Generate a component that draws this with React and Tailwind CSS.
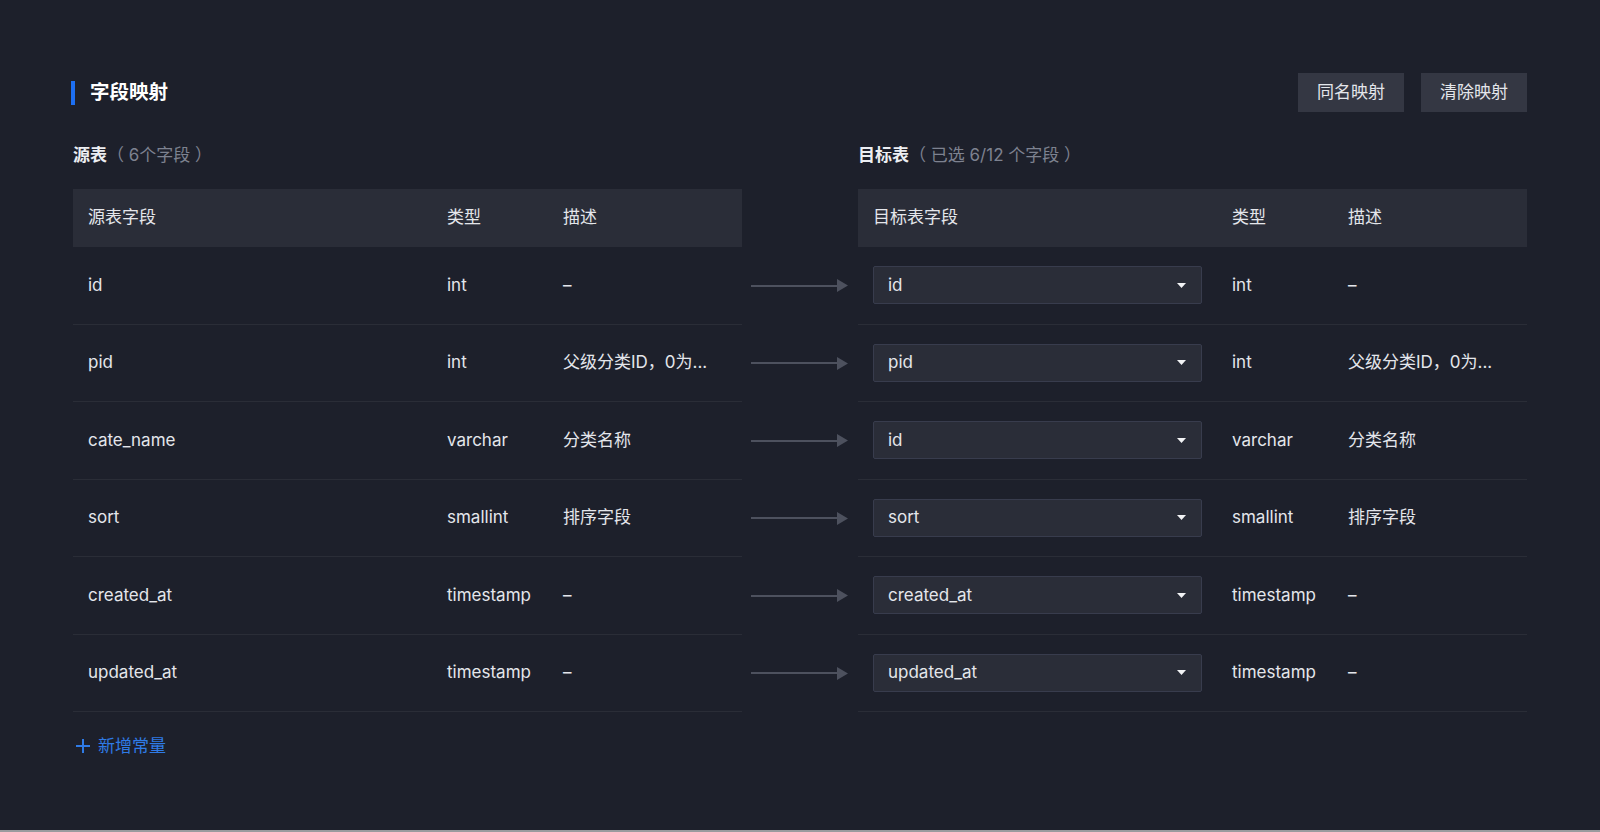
import React from 'react';

const rows = [
  { src: 'id', type: 'int', desc: '–', target: 'id' },
  { src: 'pid', type: 'int', desc: '父级分类ID，0为...', target: 'pid' },
  { src: 'cate_name', type: 'varchar', desc: '分类名称', target: 'id' },
  { src: 'sort', type: 'smallint', desc: '排序字段', target: 'sort' },
  { src: 'created_at', type: 'timestamp', desc: '–', target: 'created_at' },
  { src: 'updated_at', type: 'timestamp', desc: '–', target: 'updated_at' },
];

const Arrow = () => (
  <div className="w-[116px] flex items-center pl-[9px]">
    <div className="w-[86px] h-[2px] bg-[#4d515e]"></div>
    <svg width="11" height="13" viewBox="0 0 11 13" className="block">
      <path d="M0 0 L11 6.5 L0 13 Z" fill="#4d515e" />
    </svg>
  </div>
);

const Select = ({ value }) => (
  <div className="w-[329px] h-[38px] flex items-center justify-between pl-[14px] pr-[15px] bg-[#2a2d38] border border-[#383c4d] rounded-[2px]">
    <span>{value}</span>
    <svg width="9" height="5" viewBox="0 0 9 5" className="block">
      <path d="M0 0 L9 0 L4.5 5 Z" fill="#f2f3f5" />
    </svg>
  </div>
);

export default function App() {
  return (
    <div
      className="w-full h-[832px] bg-[#9a9b9e] text-[#e4e6eb] text-[17px]"
      style={{ fontFamily: 'Inter, "Noto Sans CJK SC", sans-serif' }}
    >
      <div className="h-[830px] bg-[#1d202b] px-[73px] pt-[73px]">
        {/* Header */}
        <div className="flex items-center justify-between h-[39px]">
          <div className="flex items-center -ml-[2px]">
            <div className="w-[4px] h-[24px] bg-[#1d6ff2]"></div>
            <span className="ml-[15px] text-[19.5px] font-bold text-white">字段映射</span>
          </div>
          <div className="flex items-center gap-[17px]">
            <button className="w-[106px] h-[39px] bg-[#343743] text-[#e4e6eb] text-[17px]">同名映射</button>
            <button className="w-[106px] h-[39px] bg-[#343743] text-[#e4e6eb] text-[17px]">清除映射</button>
          </div>
        </div>

        {/* Titles */}
        <div className="flex mt-[31px] leading-[24px]">
          <div className="w-[785px]">
            <span className="font-bold text-[#eceef2]">源表</span>
            <span className="text-[#7d8290]">（ 6个字段 ）</span>
          </div>
          <div>
            <span className="font-bold text-[#eceef2]">目标表</span>
            <span className="text-[#7d8290]">（ 已选 6/12 个字段 ）</span>
          </div>
        </div>

        {/* Table header */}
        <div className="flex mt-[22px]">
          <div className="w-[669px] h-[58px] bg-[#2a2d38] grid grid-cols-[359px_116px_1fr] items-center">
            <div className="pl-[15px]">源表字段</div>
            <div className="pl-[15px]">类型</div>
            <div className="pl-[15px]">描述</div>
          </div>
          <div className="w-[116px]"></div>
          <div className="w-[669px] h-[58px] bg-[#2a2d38] grid grid-cols-[359px_116px_1fr] items-center">
            <div className="pl-[15px]">目标表字段</div>
            <div className="pl-[15px]">类型</div>
            <div className="pl-[15px]">描述</div>
          </div>
        </div>

        {/* Rows */}
        {rows.map((r, i) => (
          <div key={i} className="flex h-[77.5px]">
            <div className="w-[669px] border-b border-[#2a2d37] grid grid-cols-[359px_116px_1fr] items-center">
              <div className="pl-[15px]">{r.src}</div>
              <div className="pl-[15px]">{r.type}</div>
              <div className="pl-[15px]">{r.desc}</div>
            </div>
            <Arrow />
            <div className="w-[669px] border-b border-[#2a2d37] grid grid-cols-[359px_116px_1fr] items-center">
              <div className="pl-[15px]">
                <Select value={r.target} />
              </div>
              <div className="pl-[15px]">{r.type}</div>
              <div className="pl-[15px]">{r.desc}</div>
            </div>
          </div>
        ))}

        {/* Add constant */}
        <div className="mt-[22px] flex items-center leading-[24px] text-[#2f7be6]">
          <svg width="14" height="14" viewBox="0 0 14 14" className="block ml-[3px]">
            <path d="M7 0 V14 M0 7 H14" stroke="#2f7be6" strokeWidth="2" />
          </svg>
          <span className="ml-[8px]">新增常量</span>
        </div>
      </div>
    </div>
  );
}
